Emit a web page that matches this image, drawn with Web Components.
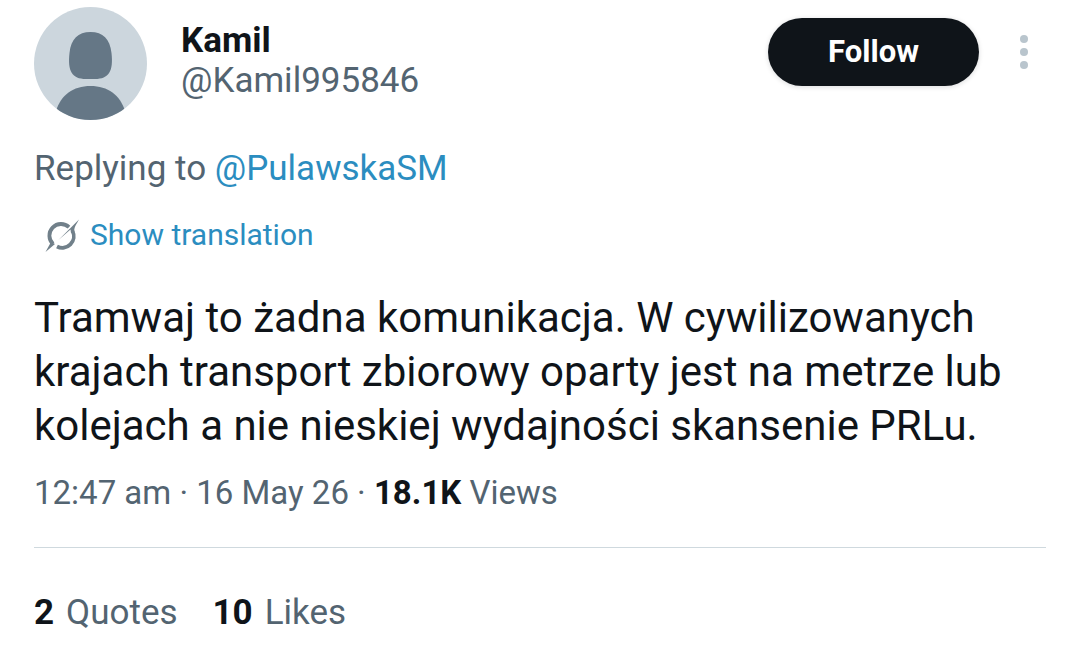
<!DOCTYPE html>
<html lang="en">
<head>
<meta charset="utf-8">
<meta name="viewport" content="width=device-width, initial-scale=1">
<title>Post</title>
<style>
body {
  margin: 0;
  background: #fff;
  color: #0f1419;
  font-family: Roboto, "Noto Sans", sans-serif;
  --muted: #536471;
  --link: #2b8dc0;
}
</style>
</head>
<body>
<post-card>
  <post-author slot="author" name="Kamil" handle="@Kamil995846"></post-author>
  <reply-context slot="context" handle="@PulawskaSM"></reply-context>
  <translate-link slot="translate">Show translation</translate-link>
  <span lang="pl">Tramwaj to żadna komunikacja. W cywilizowanych krajach transport zbiorowy oparty jest na metrze lub kolejach a nie nieskiej wydajności skansenie PRLu.</span>
  <post-meta slot="meta" time="12:47 am" date="16 May 26" views="18.1K"></post-meta>
  <post-stat slot="stats" count="2">Quotes</post-stat>
  <post-stat slot="stats" count="10">Likes</post-stat>
</post-card>
<script>
class BaseElement extends HTMLElement {
  connectedCallback() {
    if (!this.shadowRoot) this.attachShadow({ mode: "open" }).innerHTML = this.render();
  }
}

customElements.define("post-card", class extends BaseElement {
  render() {
    return `<style>
      :host { display: block; padding: 7px 34px 12px; }
      article { display: flex; flex-direction: column; }
      .context { margin-top: 27px; }
      .translate { margin-top: 24px; }
      p { margin: 36px 0 0; font-size: 42px; line-height: 54px; }
      .meta { margin-top: 18px; padding-bottom: 32px; border-bottom: 1px solid #cfd9de; }
      .stats { display: flex; gap: 35px; margin-top: 43px; }
    </style>
    <article>
      <slot name="author"></slot>
      <div class="context"><slot name="context"></slot></div>
      <div class="translate"><slot name="translate"></slot></div>
      <p><slot></slot></p>
      <div class="meta"><slot name="meta"></slot></div>
      <div class="stats"><slot name="stats"></slot></div>
    </article>`;
  }
});

customElements.define("user-avatar", class extends BaseElement {
  render() {
    return `<style>
      :host { display: block; width: 113px; height: 113px; border-radius: 50%; overflow: hidden; }
      svg { display: block; width: 100%; height: 100%; }
    </style>
    <svg viewBox="0 0 113 113" aria-hidden="true">
      <rect width="113" height="113" fill="#ccd6dd"/>
      <path fill="#657786" d="M56.500 25C69 25 76 32 77.500 46C79.500 64 75 72 61 72H52C38 72 33.500 64 35.500 46C37 32 44 25 56.500 25Z"/>
      <path fill="#657786" d="M22 104C27 88 39 79 56.500 79S86 88 91 104V113H22Z"/>
    </svg>`;
  }
});

customElements.define("follow-button", class extends BaseElement {
  render() {
    return `<style>
      :host { display: block; }
      button { width: 211px; height: 68px; padding: 0; border: 0; border-radius: 34px; background: #0f1419; color: #fff;
        font: 700 31px/40px Roboto, "Noto Sans", sans-serif; box-shadow: 0 1px 5px #0f141926; }
    </style>
    <button type="button"><slot></slot></button>`;
  }
});

customElements.define("more-button", class extends BaseElement {
  render() {
    return `<style>
      :host { display: block; }
      button { display: block; padding: 0; border: 0; background: none; }
      svg { display: block; }
    </style>
    <button type="button" aria-label="More"><svg width="44" height="44" viewBox="0 0 44 44" fill="#b9c5cd" aria-hidden="true">
      <circle cx="22" cy="9" r="4"/><circle cx="22" cy="22" r="4"/><circle cx="22" cy="35" r="4"/>
    </svg></button>`;
  }
});

customElements.define("post-author", class extends BaseElement {
  render() {
    return `<style>
      :host { display: flex; align-items: flex-start; }
      .names { flex: 1; margin: 14px 0 0 34px; font-size: 35px; line-height: 40px; }
      .name { font-weight: 700; }
      .handle { color: var(--muted); }
      follow-button { margin-top: 11px; }
      more-button { margin: 23px 0 0 23px; }
    </style>
    <user-avatar></user-avatar>
    <div class="names">
      <div class="name">${this.getAttribute("name")}</div>
      <div class="handle">${this.getAttribute("handle")}</div>
    </div>
    <follow-button>Follow</follow-button>
    <more-button></more-button>`;
  }
});

customElements.define("reply-context", class extends BaseElement {
  render() {
    return `<style>
      :host { display: block; font-size: 35px; line-height: 44px; color: var(--muted); }
      a { color: var(--link); text-decoration: none; }
    </style>Replying to <a href="#profile">${this.getAttribute("handle")}</a>`;
  }
});

customElements.define("translate-link", class extends BaseElement {
  render() {
    return `<style>
      :host { display: flex; align-items: center; gap: 11px; padding-left: 11px; font-size: 30px; line-height: 40px; }
      a { color: var(--link); text-decoration: none; }
    </style>
    <svg width="34" height="34" viewBox="0 0 34 34" aria-hidden="true">
      <g fill="none" stroke="#71808a" stroke-width="3.800">
        <path d="M8 26A11.500 11.500 0 0 1 24 9.200"/>
        <path d="M27.500 13A11.500 11.500 0 0 1 12 28.500"/>
      </g>
      <path fill="#71808a" d="M13.500 22L34 1.500C31 7 28.500 10 29.500 14L26 15L25.500 11.500ZM0.500 34L6 24L10 26Z"/>
    </svg>
    <a href="#translation"><slot></slot></a>`;
  }
});

customElements.define("post-meta", class extends BaseElement {
  render() {
    return `<style>
      :host { display: block; font-size: 33px; line-height: 44px; color: var(--muted); }
      strong { color: #0f1419; font-weight: 700; }
    </style><time>${this.getAttribute("time")} · ${this.getAttribute("date")}</time> · <strong>${this.getAttribute("views")}</strong> Views`;
  }
});

customElements.define("post-stat", class extends BaseElement {
  render() {
    return `<style>
      :host { display: flex; gap: 12px; font-size: 35px; line-height: 44px; color: var(--muted); }
      strong { color: #0f1419; font-weight: 700; }
    </style><strong>${this.getAttribute("count")}</strong><span><slot></slot></span>`;
  }
});
</script>
</body>
</html>
